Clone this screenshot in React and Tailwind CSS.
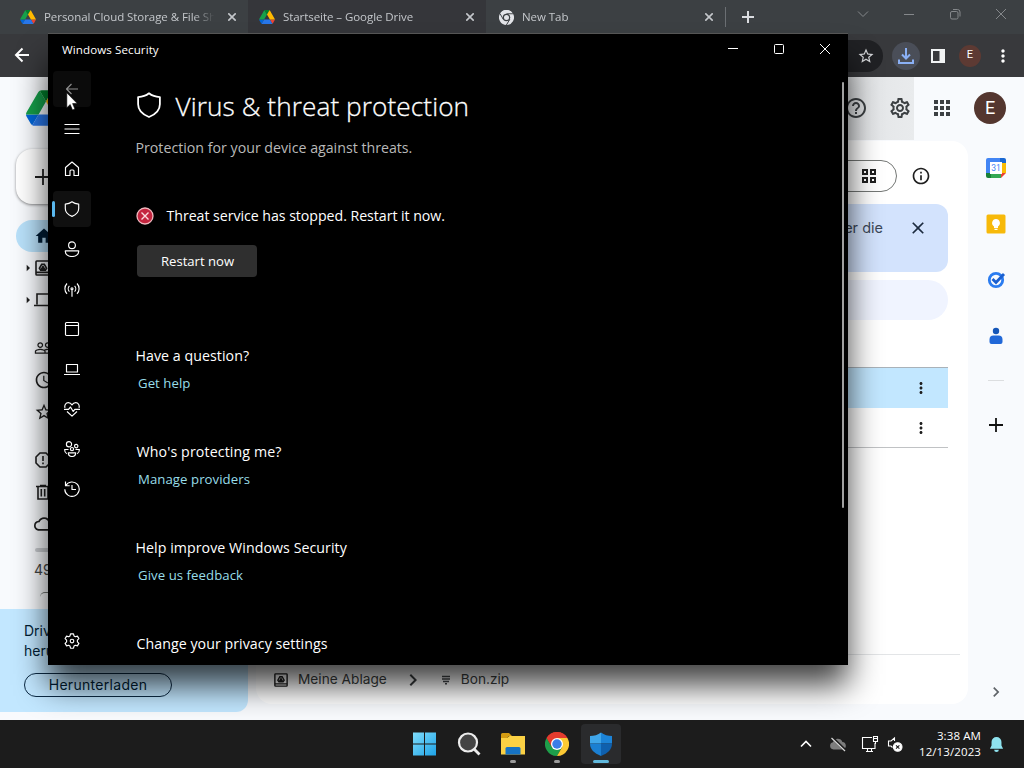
import {
  MdAccessTime,
  MdApps,
  MdArrowRight,
  MdChevronRight,
  MdClose,
  MdCloudQueue,
  MdHelpOutline,
  MdHome,
  MdInfoOutline,
  MdMoreVert,
  MdOutlineSettings,
  MdPeopleOutline,
  MdStarBorder,
} from 'react-icons/md';

const segoe = "font-['Open_Sans',sans-serif]";

function DriveLogo({ className }) {
  return (
    <svg viewBox="0 0 87.3 78" className={className}>
      <path d="m6.6 66.85 3.85 6.65c.8 1.4 1.95 2.5 3.3 3.3l13.75-23.8h-27.5c0 1.55.4 3.1 1.2 4.5z" fill="#0066da" />
      <path d="m43.65 25-13.75-23.8c-1.35.8-2.5 1.9-3.3 3.3l-25.4 44a9.06 9.06 0 0 0 -1.2 4.5h27.5z" fill="#16a04a" />
      <path d="m73.55 76.8c1.35-.8 2.5-1.9 3.3-3.3l1.6-2.75 7.65-13.25c.8-1.4 1.2-2.95 1.2-4.5h-27.5l5.85 11.5z" fill="#ea4335" />
      <path d="m43.65 25 13.75-23.8c-1.35-.8-2.9-1.2-4.5-1.2h-18.5c-1.6 0-3.15.45-4.5 1.2z" fill="#00832d" />
      <path d="m59.8 53h-32.3l-13.75 23.8c1.35.8 2.9 1.2 4.5 1.2h50.8c1.6 0 3.15-.45 4.5-1.2z" fill="#2876e8" />
      <path d="m73.4 26.5-12.7-22c-.8-1.4-1.95-2.5-3.3-3.3l-13.75 23.8 16.15 28h27.45c0-1.55-.4-3.1-1.2-4.5z" fill="#ffba00" />
    </svg>
  );
}

function ChromeLogo({ className, mono }) {
  const [red, yellow, green, blue, ring] = mono
    ? ['#e2e4e8', '#e2e4e8', '#e2e4e8', '#e2e4e8', '#3c4043']
    : ['#e33b2e', '#fcc934', '#1e9e4a', '#3b7de8', '#ffffff'];
  return (
    <svg viewBox="0 0 48 48" className={className}>
      <path d="M24 24 3.2 12A24 24 0 0 1 44.8 12Z" fill={red} />
      <path d="M3.2 12A24 24 0 0 0 24 48L34.4 30 24 24 13.6 30Z" fill={green} />
      <path d="M24 12H44.8A24 24 0 0 1 24 48L34.4 30Z" fill={yellow} />
      <path d="M3.2 12 13.6 30 24 24V12Z" fill={green} />
      <path d="M24 12H44.8A24 24 0 0 0 3.2 12L13.6 30Z" fill={red} />
      {mono && <path d="M24 12H46M13.6 30 3 11M34.4 30 23 49" stroke={ring} strokeWidth="3" />}
      <circle cx="24" cy="24" r="12" fill={ring} />
      <circle cx="24" cy="24" r={mono ? 8 : 9.5} fill={blue} />
    </svg>
  );
}

const tabs = [
  { title: 'Personal Cloud Storage & File Sh', icon: 'drive', width: 'w-[248px] pl-5', bg: 'bg-[#3c4043]' },
  { title: 'Startseite – Google Drive', icon: 'drive', width: 'w-[238px] pl-[11px]', bg: 'bg-[#35363a]' },
  { title: 'New Tab', icon: 'chrome', width: 'w-[239px] pl-[13px]', bg: 'bg-[#3c4043]' },
];

function TabStrip() {
  return (
    <div className="flex h-[34px] bg-[#3c4043] text-[#c4c7cb]">
      {tabs.map((tab) => (
        <div key={tab.title} className={`flex items-center pr-3 ${tab.width} ${tab.bg}`}>
          {tab.icon === 'drive' ? <DriveLogo className="h-3.5 w-4 shrink-0" /> : <ChromeLogo mono className="size-[15px] shrink-0" />}
          <span className={`${segoe} ml-2 w-[174px] whitespace-nowrap text-[11.5px] tracking-[-0.06px] [mask-image:linear-gradient(to_right,black_86%,transparent_98%)]`}>
            {tab.title}
          </span>
          <svg viewBox="0 0 8 8" className="ml-auto size-2 shrink-0" stroke="currentColor" strokeWidth="1.6">
            <path d="m.3.3 7.4 7.4M7.700.3.3 7.700" />
          </svg>
        </div>
      ))}
      <div className="my-[7px] w-px bg-[#6b6f73]" />
      <svg viewBox="0 0 12 12" className="mt-[11px] ml-4 size-3" stroke="#dadce0" strokeWidth="2">
        <path d="M6 0v12M0 6h12" />
      </svg>
      <div className="ml-auto flex h-7 text-[#85888b]">
        <WindowButton><path d="M1 3.5 6 8.5 11 3.5" /></WindowButton>
        <WindowButton><path d="M1 6.5h10" /></WindowButton>
        <WindowButton><rect x="1.5" y="3.5" width="7.5" height="7.5" rx="1.5" /><path d="M4 1.5h4.5a2.5 2.5 0 0 1 2.5 2.5v4.5" /></WindowButton>
        <WindowButton><path d="m1 1 10 10M11 1 1 11" /></WindowButton>
      </div>
    </div>
  );
}

function WindowButton({ children }) {
  return (
    <button className="grid w-[46px] place-items-center">
      <svg viewBox="0 0 12 12" className="size-3" fill="none" stroke="currentColor">
        {children}
      </svg>
    </button>
  );
}

function Toolbar() {
  return (
    <div className="flex h-[43px] items-center bg-[#38393c] pl-3.5 text-white">
      <svg viewBox="0 0 16 16" className="mb-px size-4" fill="none" stroke="currentColor" strokeWidth="2">
        <path d="M15 8H2.500M8.500 1.500 2 8l6.500 6.500" />
      </svg>
      <div className="ml-20 flex h-8 flex-1 items-center justify-end rounded-full bg-[#202124] pr-2">
        <MdStarBorder className="size-[18px] text-[#d5d7da]" />
      </div>
      <div className="ml-[9px] grid size-7 place-items-center rounded-full bg-[#4a4e58]">
        <svg viewBox="0 0 16 16" className="size-4" fill="none" stroke="#8ab0f5" strokeWidth="2">
          <path d="M8 0v10M4 6.5l4 4 4-4M1 11.5V15h14v-3.5" />
        </svg>
      </div>
      <svg viewBox="0 0 14 14" className="ml-[11px] size-3.5">
        <path d="M0 0h14v14H0zM2 2v10h6.5V2z" fill="#f1f3f4" fillRule="evenodd" />
      </svg>
      <div className="ml-3.5 grid size-[22px] place-items-center rounded-full bg-[#5d3a33] font-['Roboto',sans-serif] text-[11px]">E</div>
      <MdMoreVert className="mr-[11px] ml-3 size-5" />
    </div>
  );
}

function DriveHeader() {
  return (
    <header className="flex h-[63px] items-center text-[#3c4043]">
      <DriveLogo className="mb-0.5 ml-[26px] h-9 w-10" />
      <div className="ml-auto flex h-full w-[90px] items-center bg-linear-to-r from-[#dfe1e3] to-[#e9ebed] pb-0.5 pl-[22px]">
        <MdHelpOutline className="size-6 -translate-x-0.5" />
        <MdOutlineSettings className="ml-[18px] size-6" />
      </div>
      <MdApps className="mb-0.5 ml-4 size-6" />
      <div className="mr-[18px] mb-0.5 ml-5 grid size-8 place-items-center rounded-full bg-[#54362f] font-['Roboto',sans-serif] text-lg text-white">E</div>
    </header>
  );
}

function MyDriveIcon({ className }) {
  return (
    <svg viewBox="0 0 16 16" className={className} fill="none" stroke="currentColor" strokeWidth="1.6">
      <rect x="1" y="1" width="14" height="14" rx="0.8" />
      <path d="M1 12.4h14M6.7 4.3h2.6l2.3 4-1.2 1.8H5.6L4.4 8.3zM8 6.5 6.8 8.5h2.4z" />
    </svg>
  );
}

function ComputersIcon({ className }) {
  return (
    <svg viewBox="0 0 18 16" className={className} fill="none" stroke="currentColor" strokeWidth="1.6">
      <path d="M3 12.500V2h15M0 13.500h16" />
    </svg>
  );
}

function SpamIcon({ className }) {
  return (
    <svg viewBox="0 0 16 16" className={className} fill="none" stroke="currentColor" strokeWidth="1.6">
      <path d="M5 1h6l4 4v6l-4 4H5l-4-4V5zM8 4v5M8 10.5v1.8" />
    </svg>
  );
}

function TrashIcon({ className }) {
  return (
    <svg viewBox="0 0 16 16" className={className} fill="none" stroke="currentColor" strokeWidth="1.6">
      <path d="M1 2.5h14M5 1.5h6M3 2.5V15h10V2.5M6.3 5v7.5M9.7 5v7.5" />
    </svg>
  );
}

const driveNav = [
  [
    { icon: MdHome, active: true },
    { icon: MyDriveIcon, arrow: true, size: 'size-4' },
    { icon: ComputersIcon, arrow: true, size: 'h-4 w-[18px]' },
  ],
  [{ icon: MdPeopleOutline }, { icon: MdAccessTime }, { icon: MdStarBorder }],
  [{ icon: SpamIcon, size: 'size-4' }, { icon: TrashIcon, size: 'size-4' }, { icon: MdCloudQueue }],
];

function DriveSidebar() {
  return (
    <aside className="flex w-[256px] flex-col text-[#1f1f1f]">
      <button className="mt-[9px] ml-4 flex h-[55px] w-[108px] items-center rounded-2xl bg-white pl-[19px] shadow-[0_1px_3px_rgba(0,0,0,0.45)]">
        <svg viewBox="0 0 16 16" className="size-4" stroke="currentColor" strokeWidth="1.8"><path d="M8 0v16M0 8h16" /></svg>
      </button>
      <div className="mt-4 flex flex-col gap-4">
        {driveNav.map((group, i) => (
          <div key={i}>
            {group.map(({ icon: Icon, active, arrow, size }, j) => (
              <div key={j} className={`ml-4 flex h-8 w-[224px] items-center rounded-full ${active ? 'bg-[#b9e1fa] text-[#001d35]' : ''}`}>
                <span className="w-[18px] shrink-0">{arrow && <MdArrowRight className="ml-1 size-4" />}</span>
                <span className="grid w-[18px] shrink-0 place-items-center">
                  <Icon className={`${size || 'size-5'} shrink-0`} />
                </span>
              </div>
            ))}
          </div>
        ))}
      </div>
      <div className="mt-2 ml-[35px] h-1 w-[180px] rounded bg-[#c9ccd0]" />
      <div className="mt-2 ml-[34px] h-5 font-['Inter',sans-serif] text-sm text-[#444746]">49 MB</div>
      <div className="mt-3 mb-3 ml-[40px] h-[5px] w-[180px] rounded-t-full border-t border-[#747775]" />
      <div className="h-[103px] w-[248px] rounded-br-xl bg-[#c2e7ff] pt-3 pl-6 font-['Inter',sans-serif] text-sm text-[#001d35]">
        <p className="leading-5">Drive<br />herunter</p>
        <button className="mt-3 h-6 w-[148px] rounded-full border border-[#0b2a45] text-[14px] leading-5 tracking-[0.3px]">Herunterladen</button>
      </div>
    </aside>
  );
}

function DriveMain() {
  return (
    <main className="mt-px flex h-[563px] w-[712px] flex-col rounded-2xl bg-white font-['Inter',sans-serif] text-[#1f1f1f]">
      <div className="mt-[19px] flex h-8 items-center justify-end pr-[37px]">
        <div className="flex h-8 w-24 items-center justify-end rounded-full border border-[#747775] pr-5">
          <svg viewBox="0 0 14 14" className="size-3.5" fill="none" stroke="currentColor" strokeWidth="2">
            <path d="M1 1h4v4H1zM9 1h4v4H9zM1 9h4v4H1zM9 9h4v4H9z" />
          </svg>
        </div>
        <MdInfoOutline className="ml-[14px] size-5" />
      </div>
      <div className="mt-3 mr-5 flex h-[68px] items-start justify-end rounded-xl bg-[#d3e3fd] pt-3.5 pr-5 text-sm text-[#3c4858]">
        <span className="text-[14.5px]">über die</span>
        <MdClose className="ml-[25px] size-5 text-[#1c2b3f]" />
      </div>
      <div className="mt-2 mr-5 h-10 rounded-full bg-[#f0f4ff]" />
      <div className="mt-[47px] mr-5 flex h-[41px] items-center justify-end border-t border-[#a9b2b9] bg-[#c2e7ff] pr-[18px]">
        <MdMoreVert className="size-[18px]" />
      </div>
      <div className="mr-5 flex h-10 items-center justify-end border-b border-[#c0c2c4] pr-[18px]">
        <MdMoreVert className="size-[18px]" />
      </div>
      <div className="mt-auto mr-2 flex h-[50px] items-center border-t border-[#e3e5e7] pl-[18px] text-[13.7px] text-[#3c3f41]">
        <MyDriveIcon className="size-3.5 text-[#1f1f1f]" />
        <span className="ml-2.5">Meine Ablage</span>
        <MdChevronRight className="ml-3.5 size-6" />
        <svg viewBox="0 0 8 10" className="ml-[17px] h-2.5 w-2" stroke="#45484b" strokeWidth="1.5"><path d="M0 1.5h8M0 4h8M1 6.5h6M3 8.7h2" /></svg>
        <span className="ml-[11px]">Bon.zip</span>
      </div>
    </main>
  );
}

function SidePanel() {
  return (
    <aside className="flex w-14 flex-col items-center">
      <div className="grid h-14 place-items-center">
        <svg viewBox="0 0 20 20" className="size-5">
          <path d="M2 0h12v5H5v10H0V2a2 2 0 0 1 2-2z" fill="#4285f4" />
          <path d="M14 0h4a2 2 0 0 1 2 2v3h-6z" fill="#1967d2" />
          <path d="M15 5h5v10h-5z" fill="#fbbc04" />
          <path d="M5 15h10v5H5z" fill="#34a853" />
          <path d="M0 15h5v5H2a2 2 0 0 1-2-2z" fill="#188038" />
          <path d="M15 20v-5h5z" fill="#ea4335" />
          <path d="M4 4h12v12H4z" fill="#fff" />
          <text x="10" y="13" textAnchor="middle" fontSize="8.5" fontFamily="Roboto" fill="#4285f4">31</text>
        </svg>
      </div>
      <div className="grid h-14 place-items-center">
        <svg viewBox="0 0 20 20" className="size-5">
          <rect x="0.5" y="0.5" width="19" height="19" rx="1.5" fill="#f7b90a" />
          <path d="M10 5a4 4 0 0 0-2 7.4V14h4v-1.6A4 4 0 0 0 10 5zM8.5 14.7h3v1.2h-3z" fill="#fff" />
        </svg>
      </div>
      <div className="grid h-14 place-items-center">
        <svg viewBox="0 0 20 20" className="size-5" fill="none">
          <circle cx="10" cy="10" r="6.7" stroke="#2b7cf0" strokeWidth="2.8" />
          <path d="m6.5 9 3.500 3.500 8-8.500" stroke="#1a5fd0" strokeWidth="2.800" />
        </svg>
      </div>
      <div className="grid h-14 place-items-center">
        <svg viewBox="0 0 20 20" className="size-5">
          <circle cx="10" cy="5" r="3.2" fill="#1556b8" />
          <path d="M3.5 13.500a4 4 0 0 1 4-4h5a4 4 0 0 1 4 4v2.500a2 2 0 0 1-2 2h-9a2 2 0 0 1-2-2z" fill="#2168d8" />
        </svg>
      </div>
      <div className="mt-4 h-px w-4 bg-[#dcdee0]" />
      <svg viewBox="0 0 14 14" className="mt-[37px] size-3.5" stroke="#111" strokeWidth="1.8"><path d="M7 0v14M0 7h14" /></svg>
      <MdChevronRight className="mt-auto mb-[18px] size-5 text-[#5f6368]" />
    </aside>
  );
}

const shieldPath = 'M8 .8C6.300 2.200 4 3 1.300 3.100v4.400c0 3.600 2.600 6.200 6.700 7.900 4.100-1.700 6.700-4.300 6.700-7.900V3.100C12 3 9.700 2.200 8 .8z';
const gearPath =
  'M6.5 .8h3l.5 2.100 1.400.8 2-.6 1.500 2.500-1.500 1.500v1.800l1.500 1.500-1.500 2.500-2-.6-1.400.8-.5 2.100h-3L6 13.100l-1.400-.8-2 .6-1.500-2.500 1.500-1.500V7.100L1.100 5.600l1.500-2.500 2 .6L6 2.900z';

const securityNav = [
  { name: 'back', d: 'M14 8H2.5M7.5 3 2.5 8l5 5', dim: true },
  { name: 'menu', d: 'M0.5 3.500h15M0.5 8h15M0.5 12.500h15' },
  { name: 'home', d: 'M1.500 14.500V6.500L8 1l6.500 5.500v8H10v-4.500a1 1 0 0 0-1-1H7a1 1 0 0 0-1 1v4.500z' },
  { name: 'shield', d: shieldPath, active: true },
  { name: 'account', d: 'M8 .8a3.400 3.400 0 1 1 0 6.800A3.400 3.400 0 0 1 8 .8zM1.300 9.800h13.400v.8c0 2.900-3 4.900-6.700 4.900s-6.700-2-6.700-4.900z' },
  { name: 'network', d: 'M3 2.500a7.500 7.500 0 0 0 0 10.400M13 2.500a7.500 7.500 0 0 1 0 10.400M5.400 4.800a4.200 4.200 0 0 0 0 5.800M10.600 4.800a4.200 4.200 0 0 1 0 5.800M8 9v6.800M8 6.700a1 1 0 1 1 0 2 1 1 0 0 1 0-2z' },
  { name: 'app', d: 'M2.5 1.5h11a1 1 0 0 1 1 1v11a1 1 0 0 1-1 1h-11a1 1 0 0 1-1-1v-11a1 1 0 0 1 1-1zM1.5 4.5h13' },
  { name: 'device', d: 'M2.5 3.500h11v7.500h-11zM0 13.500h16' },
  { name: 'health', d: 'M1 6.800C.2 4.200 1.800 1.600 4.300 1.600c1.600 0 2.900 1 3.700 2.300.8-1.300 2.100-2.300 3.700-2.300 2.500 0 4.100 2.600 3.300 5.200M0 8.300h4.500L6.500 6l2.700 4.500 1.600-2.200H16M3 10.500l5 4.700 5-4.700' },
  { name: 'family', d: 'M5 .6a2.600 2.600 0 1 1 0 5.200A2.600 2.600 0 0 1 5 .6zM12.200 3.400a1.700 1.700 0 1 1 0 3.400 1.700 1.700 0 0 1 0-3.400zM8 6.500a1.600 1.600 0 1 1 0 3.200 1.600 1.600 0 0 1 0-3.200zM4.300 11.800h7.400c0 2.300-1.500 3.700-3.700 3.700s-3.700-1.400-3.700-3.700zM4.500 8.500H.6c0 2.300.7 3.500 2.200 4.200M11.500 8.500h3.900c0 2.300-.7 3.500-2.200 4.200' },
  { name: 'history', d: 'M1.500 .5v4.200h4.200M1.700 4.700A7.200 7.200 0 1 1 .8 8.200M8 4v4.500h4' },
];

function NavItem({ d, dim, active, children }) {
  return (
    <div className="flex h-10 items-center pl-[5px]">
      <div className={`flex h-9 w-[38px] items-center rounded ${dim ? 'bg-[#0b0b0b] text-[#8d8d8d]' : ''} ${active ? 'bg-[#101010]' : ''}`}>
        <span className={`h-4 w-[3px] -translate-x-px rounded-full ${active ? 'bg-[#5ab8ee]' : ''}`} />
        <svg viewBox="0 0 16 16" className="ml-2 size-4" fill="none" stroke="currentColor" strokeWidth="1.15" strokeLinejoin="round">
          <path d={d} />
          {children}
        </svg>
      </div>
    </div>
  );
}

const sections = [
  { title: 'Have a question?', link: 'Get help', fit: 'tracking-[0.05px]' },
  { title: "Who's protecting me?", link: 'Manage providers', fit: 'pl-px tracking-[0.12px]' },
  { title: 'Help improve Windows Security', link: 'Give us feedback', fit: 'tracking-[0.06px]' },
];

function SecurityWindow() {
  return (
    <div className={`${segoe} absolute top-[33px] left-12 flex h-[632px] w-[800px] flex-col border-t border-[#555] bg-black text-white`}>
      <div className="flex h-[31px] items-center">
        <span className="ml-3.5 text-[11.6px] tracking-[0.08px]">Windows Security</span>
        <div className="ml-auto flex h-full pb-px">
          <WindowButton><path d="M1 5.5h10" /></WindowButton>
          <WindowButton><rect x="1.5" y="1.5" width="9" height="9" rx="1" /></WindowButton>
          <WindowButton><path d="m1 1 10 10M11 1 1 11" /></WindowButton>
        </div>
      </div>
      <div className="flex h-[600px]">
        <nav className="flex w-12 flex-col pt-1">
          {securityNav.map((item) => (
            <NavItem key={item.name} {...item} />
          ))}
          <div className="mt-auto mb-1">
            <NavItem d={gearPath}><circle cx="8" cy="8" r="1.8" /></NavItem>
          </div>
        </nav>
        <div className="flex-1 overflow-hidden pl-[39.5px] text-[14.2px] whitespace-nowrap">
          <div className="mt-[22px] flex h-10 items-center">
            <svg viewBox="0 0 16 16" className="mb-1 size-[26px]" fill="none" stroke="white" strokeWidth="1.1" strokeLinejoin="round"><path d={shieldPath} /></svg>
            <h1 className="ml-3.5 text-[26.2px] font-light tracking-[0.08px] [-webkit-text-stroke:0.3px_white]">Virus &amp; threat protection</h1>
          </div>
          <p className="mt-[11px] h-5 leading-5 text-[#b9b9b9]">Protection for your device against threats.</p>
          <div className="mt-[48px] flex h-5 items-center">
            <svg viewBox="0 0 18 18" className="size-[18px]">
              <circle cx="9" cy="9" r="8" fill="#c4253f" stroke="#f0b9bf" strokeWidth="1.3" />
              <path d="m5.5 5.5 7 7M12.5 5.5l-7 7" stroke="#fbdcdf" strokeWidth="1.4" />
            </svg>
            <span className="ml-[13px] tracking-[-0.05px]">Threat service has stopped. Restart it now.</span>
          </div>
          <button className="mt-[19px] ml-px block h-8 w-[120px] rounded bg-[#2f2f2f] pt-0.5 pl-0.5 text-[13.1px]">Restart now</button>
          <div className="mt-[69px]">
            {sections.map((s) => (
              <section key={s.title} className="h-24">
                <h2 className={`h-5 leading-5 ${s.fit}`}>{s.title}</h2>
                <a className="mt-[7px] ml-[2.5px] block h-5 text-[13.2px] leading-5 tracking-[0.06px] text-[#98dde8]">{s.link}</a>
              </section>
            ))}
            <h2 className="h-5 pl-px leading-5 tracking-[0.05px]">Change your privacy settings</h2>
          </div>
        </div>
        <div className="mt-[17px] mr-[4px] h-[426px] w-0.5 rounded bg-[#a0a0a0]" />
      </div>
    </div>
  );
}

function TaskItem({ children, active, running }) {
  return (
    <div className={`mx-0.5 flex h-10 w-10 flex-col items-center rounded pt-2 ${active ? 'bg-[#2a2b2d]' : ''}`}>
      <div className="grid size-6 place-items-center">{children}</div>
      {running && <span className={`mt-1 h-[3px] rounded-full ${active ? 'w-4 bg-[#60b8dc]' : 'w-1.5 bg-[#9b9b9b]'}`} />}
    </div>
  );
}

function Taskbar() {
  return (
    <div className="relative z-10 flex h-12 items-center bg-[#1c1c1c] pl-[403px] text-white">
      <TaskItem>
        <svg viewBox="0 0 24 24" className="size-6">
          <defs>
            <linearGradient id="win" x1="0" y1="0" x2="1" y2="1">
              <stop stopColor="#7fdcfa" /><stop offset="1" stopColor="#1ea3e8" />
            </linearGradient>
          </defs>
          <path d="M0 .5h11v11H0zM12 .5h11v11H12zM0 12.5h11v11H0zM12 12.5h11v11H12z" fill="url(#win)" />
        </svg>
      </TaskItem>
      <TaskItem>
        <svg viewBox="0 0 24 24" className="size-6" fill="none" stroke="#ececec">
          <circle cx="11" cy="10.5" r="9" fill="#444" strokeWidth="2.2" />
          <path d="m17.5 17.5 5 5" strokeWidth="2.8" />
        </svg>
      </TaskItem>
      <TaskItem running>
        <svg viewBox="0 0 26 24" className="h-6 w-[26px] -translate-x-px">
          <path d="M1 2.5A1.5 1.5 0 0 1 2.5 1H9l3 3h-3L7 6H1z" fill="#d39b12" />
          <path d="M1 6h6l2.5-2H25v18.5H1z" fill="#fbd144" />
          <path d="M5.5 22.500V16.500A1.500 1.500 0 0 1 7 15h12a1.500 1.500 0 0 1 1.500 1.500v6z" fill="#1673c4" />
        </svg>
      </TaskItem>
      <TaskItem running><ChromeLogo className="size-6" /></TaskItem>
      <TaskItem running active>
        <svg viewBox="0 0 24 24" className="size-6">
          <path d="M12 0.500C9 3 5 4 1 4v7.500h11z" fill="#3fa6ea" />
          <path d="M12 .5c3 2.500 7 3.500 11 3.500v7.500H12z" fill="#1c84d8" />
          <path d="M1 11.500h11V24C5 21 1 17.500 1 11.500z" fill="#1b7fd2" />
          <path d="M23 11.500H12V24c7-3 11-6.500 11-12.500z" fill="#0f60ae" />
        </svg>
      </TaskItem>
      <svg viewBox="0 0 12 12" className="ml-auto size-3" fill="none" stroke="white" strokeWidth="1.6"><path d="m1 8.500 5-5 5 5" /></svg>
      <svg viewBox="0 0 18 16" className="ml-[17px] h-4 w-[18px]">
        <path d="M4.500 13.500a3.700 3.700 0 0 1-.5-7.300A5 5 0 0 1 13.400 6 3.800 3.800 0 0 1 13.800 13.500z" fill="#7d7d7d" />
        <path d="m3 1.500 13.500 13" stroke="#1c1c1c" strokeWidth="3" />
        <path d="m2.500 2 13.500 13" stroke="#d9d9d9" strokeWidth="1.200" />
      </svg>
      <svg viewBox="0 0 18 18" className="ml-[14px] size-[18px]" fill="none" stroke="white" strokeWidth="1.100">
        <path d="M11 2.500H1.500v11H14V8M5 16.500h7M6.500 13.500v3M10.500 13.500v3M12.500 1.500h4v5h-4zM12.500 3.500h4M14.500 6.500v2.500" />
      </svg>
      <svg viewBox="0 0 16 16" className="ml-[8px] size-4" fill="none" stroke="white" strokeWidth="1.100">
        <path d="M7.500 5V2L4 5H1.500v5H4l1.500 1.500" />
        <circle cx="10.700" cy="11" r="4.300" fill="white" />
        <path d="m9 9.300 3.400 3.400M12.400 9.300 9 12.700" stroke="#1c1c1c" />
      </svg>
      <div className={`${segoe} w-[78px] text-right text-[11.5px] leading-4 tracking-[0.1px] whitespace-nowrap`}>
        <div>3:38 AM</div>
        <div>12/13/2023</div>
      </div>
      <svg viewBox="0 0 16 18" className="mr-5 ml-2 h-[17px] w-[15px]" fill="#8fe3ef">
        <path d="M8 1a5.300 5.300 0 0 0-5.300 5.300V10L1 13.500h14L13.300 10V6.300A5.300 5.300 0 0 0 8 1zM5.500 14.500h5a2.500 2.500 0 0 1-5 0z" />
      </svg>
    </div>
  );
}

export default function App() {
  return (
    <div className="relative flex h-[768px] w-[1024px] flex-col overflow-hidden bg-[#f8fafd]">
      <div className="h-[720px]">
        <TabStrip />
        <Toolbar />
        <DriveHeader />
        <div className="flex h-[580px]">
          <DriveSidebar />
          <DriveMain />
          <SidePanel />
        </div>
      </div>
      {/* soft drop shadow under the dialog */}
      <div className="absolute top-[60px] left-12 h-[625px] w-[800px] bg-black/75 blur-[16px]" />
      <SecurityWindow />
      <Taskbar />
      <svg viewBox="0 0 12 19" className="absolute top-[92px] left-[66px] h-[19px] w-3" fill="white" stroke="black" strokeWidth="0.6">
        <path d="M.8.8v15l3.400-3.300 2.300 5.500 2.400-1-2.300-5.400h4.700z" />
      </svg>
    </div>
  );
}
